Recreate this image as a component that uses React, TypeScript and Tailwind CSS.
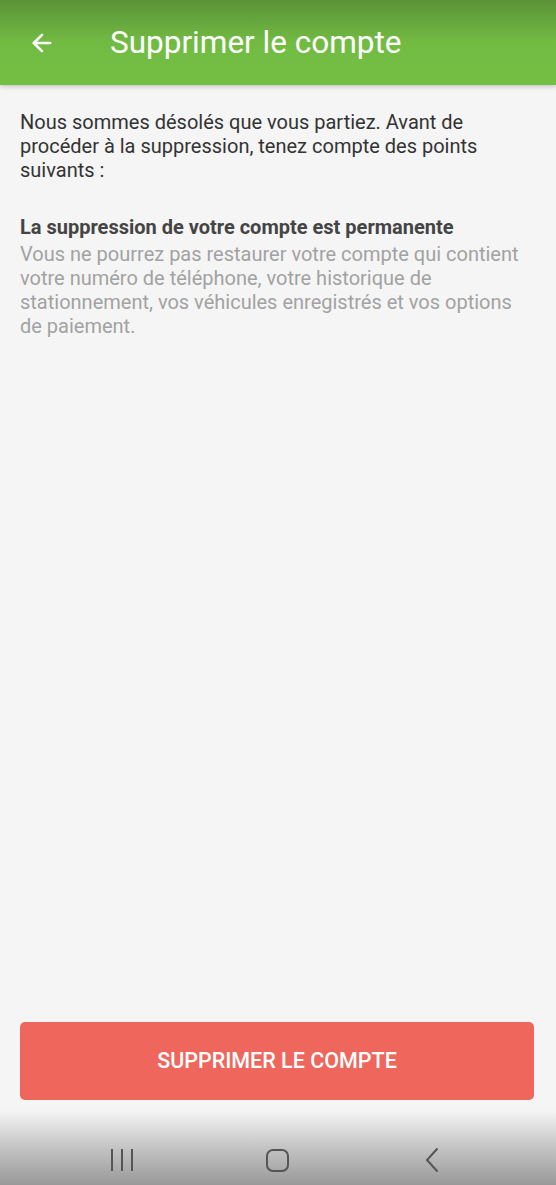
import { ArrowLeft } from "lucide-react";

const FONT = { fontFamily: "Roboto, 'Noto Sans', Arial, sans-serif" };

function Header() {
  return (
    <header className="relative z-10 flex h-[85px] shrink-0 items-center bg-gradient-to-b from-[#5b9338] via-[#72bb43] to-[#74c044] shadow-[0_2px_4px_rgba(0,0,0,0.18)]">
      <button className="ml-[28px] flex h-[28px] w-[28px] items-center justify-center text-white">
        <ArrowLeft size={28} strokeWidth={2.2} />
      </button>
      <h1 className="ml-[54px] text-[31.5px] leading-none text-white">Supprimer le compte</h1>
    </header>
  );
}

function NavBar() {
  return (
    <div className="flex h-[75px] shrink-0 items-end bg-gradient-to-b from-[#f5f5f5] via-[#c4c4c4] to-[#999999] pb-[12px]">
      <div className="flex w-full items-center">
        <div className="ml-[110px] flex h-[24px] w-[24px] items-center justify-between px-[1px]">
          <span className="h-[22px] w-[2px] bg-[#555]" />
          <span className="h-[22px] w-[2px] bg-[#555]" />
          <span className="h-[22px] w-[2px] bg-[#555]" />
        </div>
        <div className="ml-[132px] h-[23px] w-[23px] rounded-[7px] border-[2px] border-[#555]" />
        <svg className="ml-[135px]" width="16" height="26" viewBox="0 0 16 26" fill="none">
          <path d="M13 2 L3 13 L13 24" stroke="#555" strokeWidth="2" strokeLinecap="round" />
        </svg>
      </div>
    </div>
  );
}

export default function App() {
  return (
    <div className="flex h-[1185px] w-[556px] flex-col overflow-hidden bg-[#f5f5f5]" style={FONT}>
      <Header />
      <main className="flex flex-1 flex-col pl-[20px] pr-[22px] pt-[25px]">
        <p className="text-[20px] leading-[24px] text-[#333]">
          Nous sommes désolés que vous partiez. Avant de procéder à la suppression, tenez compte des points suivants :
        </p>
        <h2 className="mt-[33px] text-[20px] font-bold leading-[24px] text-[#444]">
          La suppression de votre compte est permanente
        </h2>
        <p className="mt-[3px] text-[20px] leading-[24px] text-[#a2a2a2]">
          Vous ne pourrez pas restaurer votre compte qui contient votre numéro de téléphone, votre historique de stationnement, vos véhicules enregistrés et vos options de paiement.
        </p>
        <div className="flex-1" />
        <button className="mb-[10px] flex h-[78px] w-full items-center justify-center rounded-[5px] bg-[#ef665c] text-[21.5px] font-medium text-white">
          SUPPRIMER LE COMPTE
        </button>
      </main>
      <NavBar />
    </div>
  );
}
